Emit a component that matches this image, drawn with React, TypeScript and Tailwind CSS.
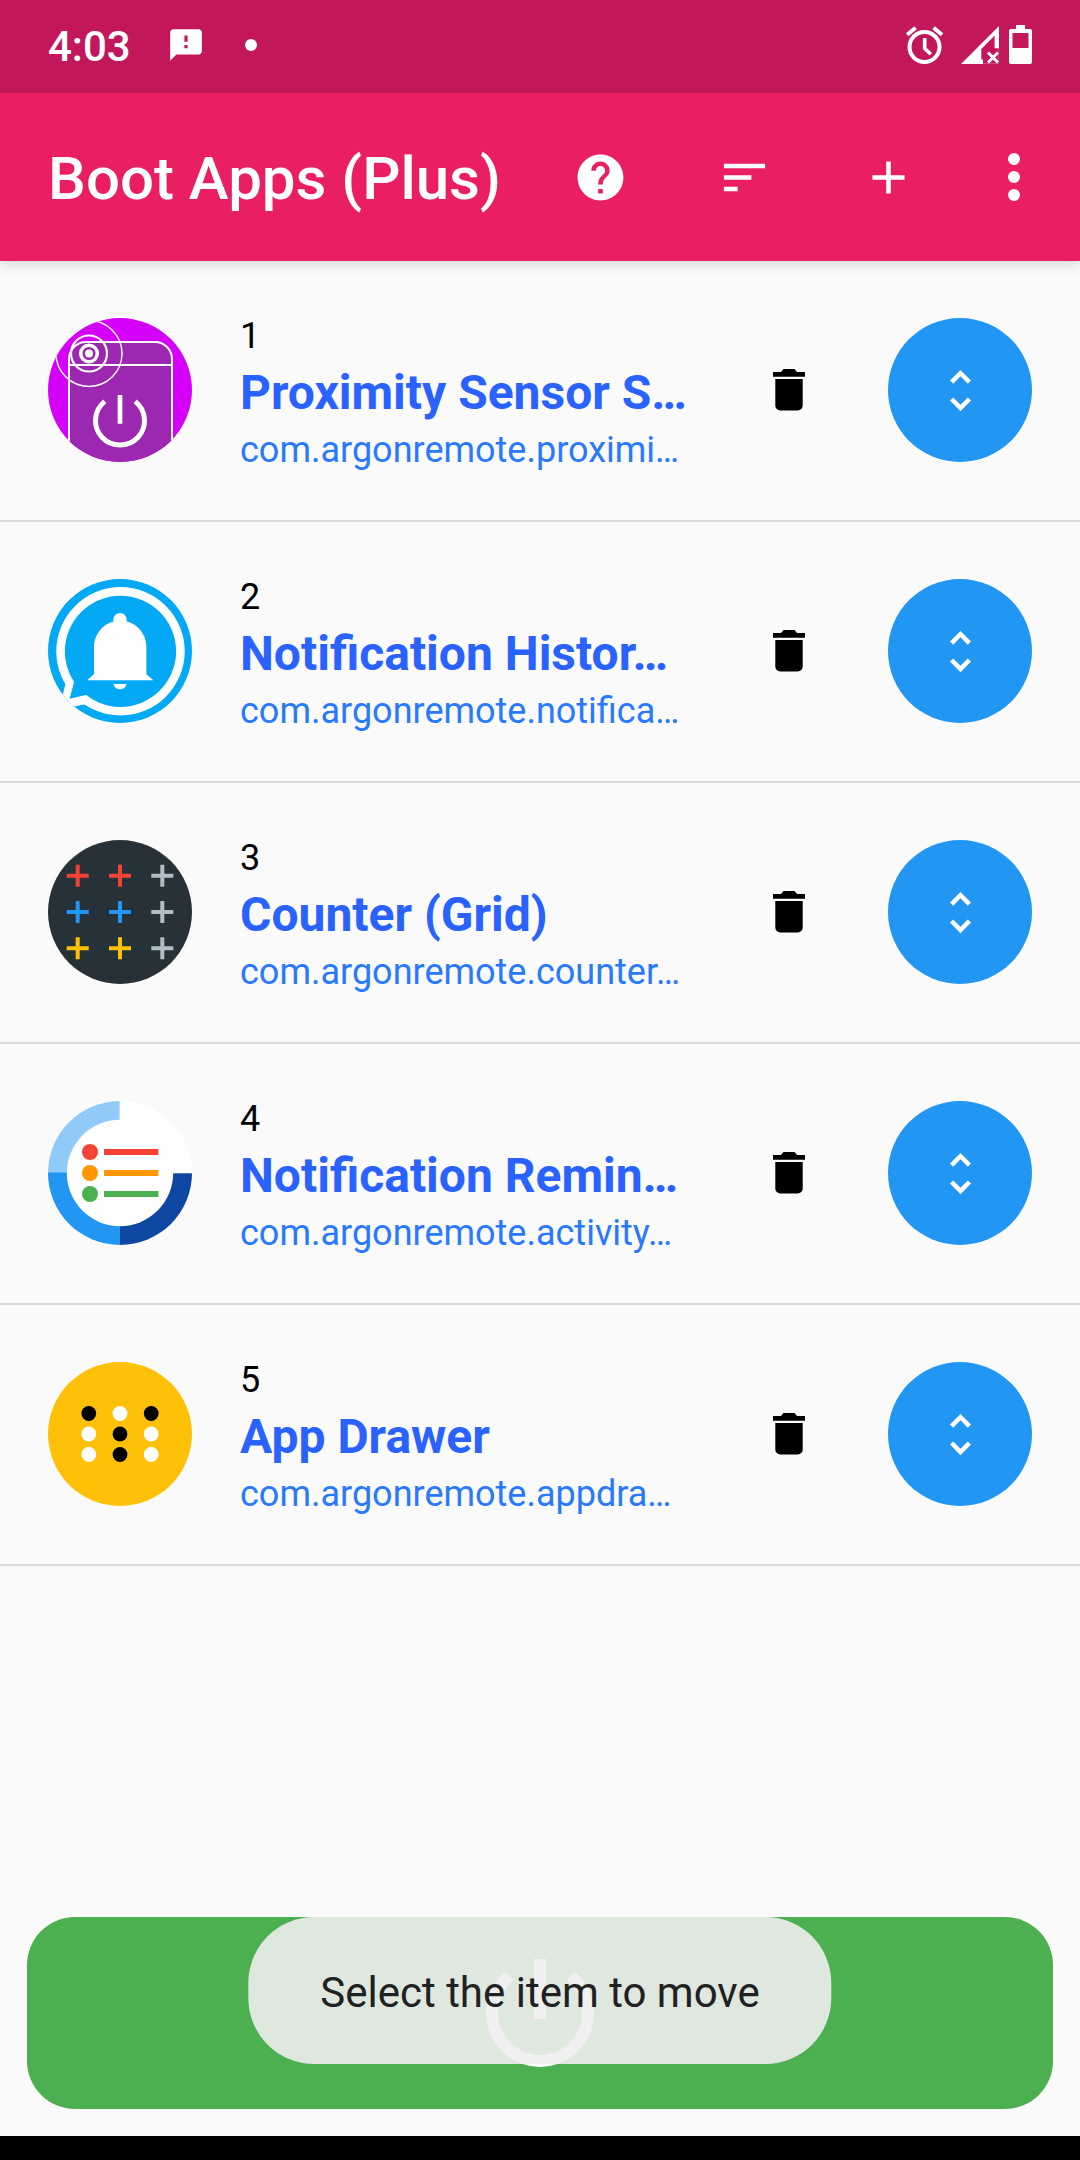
import React from "react";
import {
  MdAdd,
  MdHelp,
  MdPowerSettingsNew,
  MdSmsFailed,
  MdSort,
  MdUnfoldMore,
} from "react-icons/md";

function SensorIcon() {
  return (
    <svg viewBox="0 0 144 144" className="size-full" aria-hidden="true">
      <rect width="144" height="144" fill="#d500f9" />
      <path d="M21 160V41a17 17 0 0 1 17-17h69a17 17 0 0 1 17 17v119z" fill="#9c27b0" stroke="#fff" strokeWidth="2" />
      <path d="M21 47H124" stroke="#fff" strokeWidth="2" />
      <g fill="none" stroke="#fff">
        <circle cx="41" cy="35.5" r="8.3" strokeWidth="3.5" />
        <circle cx="41" cy="35.5" r="18" strokeWidth="2.2" />
        <circle cx="41" cy="35.5" r="33" strokeWidth="1.4" />
        <path d="M72 77V105.7" strokeWidth="4.7" />
        <path d="M56.8 83.4A24.5 24.5 0 1 0 87.2 83.4" strokeWidth="5" />
      </g>
      <circle cx="41" cy="35.5" r="4" fill="#fff" />
    </svg>
  );
}

function BellIcon() {
  return (
    <svg viewBox="0 0 144 144" className="size-full" aria-hidden="true">
      <rect width="144" height="144" fill="#03a9f4" />
      <circle cx="72.5" cy="72.3" r="64.2" fill="#fff" />
      <path d="M17.7 104L15 115L10 135L26.3 127.5L38.5 125L40 110L26 98z" fill="#fff" />
      <circle cx="72.5" cy="72.3" r="55.6" fill="#03a9f4" />
      <path d="M26 103.3L21.7 119.7L37.9 115.9L46 110L32 96z" fill="#03a9f4" />
      <circle cx="72" cy="40.7" r="6.7" fill="#fff" />
      <path d="M46 95.3V67.7a26.2 26.2 0 0 1 52.4 0V95.3L105.4 101.3H39z" fill="#fff" />
      <path d="M65.7 105h12.6a6.3 5.3 0 0 1-12.6 0z" fill="#fff" />
    </svg>
  );
}

function GridIcon() {
  const rows = [
    { y: 35.7, colors: ["#f44336", "#f44336", "#b0bec5"] },
    { y: 72, colors: ["#2196f3", "#2196f3", "#b0bec5"] },
    { y: 108.3, colors: ["#ffc107", "#ffc107", "#b0bec5"] },
  ];
  const columns = [29.7, 72, 114.3];
  return (
    <svg viewBox="0 0 144 144" className="size-full" aria-hidden="true">
      <rect width="144" height="144" fill="#263238" />
      {rows.map((row) =>
        row.colors.map((color, i) => (
          <path
            key={`${row.y}-${i}`}
            d={`M${columns[i] - 11} ${row.y}h22M${columns[i]} ${row.y - 11}v22`}
            stroke={color}
            strokeWidth="4"
          />
        )),
      )}
    </svg>
  );
}

function ReminderIcon() {
  const lines = [
    { y: 51, color: "#f44336" },
    { y: 72, color: "#ff9800" },
    { y: 93, color: "#4caf50" },
  ];
  return (
    <svg viewBox="0 0 144 144" className="size-full" aria-hidden="true">
      <rect width="144" height="144" fill="#fff" />
      <rect width="71.6" height="71.3" fill="#90caf9" />
      <rect y="71.3" width="72" height="72.7" fill="#2196f3" />
      <rect x="72" y="72.3" width="72" height="71.7" fill="#0d47a1" />
      <circle cx="72" cy="72" r="53.2" fill="#fff" />
      {lines.map((line) => (
        <g key={line.y} fill={line.color}>
          <circle cx="42" cy={line.y} r="8" />
          <rect x="56" y={line.y - 3} width="54.4" height="6" />
        </g>
      ))}
    </svg>
  );
}

function DrawerIcon() {
  const dots = [
    ["#000", "#fff", "#000"],
    ["#fff", "#000", "#fff"],
    ["#fff", "#000", "#fff"],
  ];
  return (
    <svg viewBox="0 0 144 144" className="size-full" aria-hidden="true">
      <rect width="144" height="144" fill="#ffc107" />
      {dots.map((row, r) =>
        row.map((color, c) => (
          <circle key={`${r}-${c}`} cx={40.8 + c * 31.2} cy={51.5 + r * 20.5} r="7.4" fill={color} />
        )),
      )}
    </svg>
  );
}

function TrashIcon() {
  return (
    <svg viewBox="0 0 32 42" className="h-[42px] w-8" fill="#000" aria-hidden="true">
      <path d="M0 3h8l2.5-3h11L24 3h8v4.7H0z" />
      <path d="M2.3 10h27.4v26.5a5 5 0 0 1-5 5H7.3a5 5 0 0 1-5-5z" />
    </svg>
  );
}

function AlarmIcon() {
  return (
    <svg viewBox="0 0 44 40" className="h-10 w-11" fill="none" stroke="#fff" strokeWidth="4" aria-hidden="true">
      <circle cx="21.5" cy="22" r="15" />
      <path d="M21.7 13V23.5L27.8 29.2" strokeWidth="3.6" />
      <path d="M4.2 9.8L12.6 2.8M30.6 2.8L39 9.8" />
    </svg>
  );
}

function SignalIcon() {
  return (
    <svg viewBox="0 0 38 38" className="size-[38px]" aria-hidden="true">
      <path d="M0 38L38 0V22.3H33.6V9.5L20.3 23V33.5H22V38z" fill="#fff" />
      <path d="M27 26.5l10 10M37 26.5l-10 10" stroke="#fff" strokeWidth="3" />
      <path d="M22 37.6H37.7V22" fill="none" stroke="#fff" strokeOpacity="0.4" strokeWidth="0.6" />
    </svg>
  );
}

function BatteryIcon() {
  return (
    <svg viewBox="0 0 23 39" className="h-[39px] w-[23px]" aria-hidden="true">
      <path
        fillRule="evenodd"
        d="M7 0h9v4h5a2 2 0 0 1 2 2v31a2 2 0 0 1-2 2H2a2 2 0 0 1-2-2V6a2 2 0 0 1 2-2h5zM3.5 8v15h16V8z"
        fill="#fff"
      />
    </svg>
  );
}

const apps = [
  { name: "Proximity Sensor S…", pkg: "com.argonremote.proximi…", Icon: SensorIcon },
  { name: "Notification Histor…", pkg: "com.argonremote.notifica…", Icon: BellIcon },
  { name: "Counter (Grid)", pkg: "com.argonremote.counter…", Icon: GridIcon },
  { name: "Notification Remin…", pkg: "com.argonremote.activity…", Icon: ReminderIcon },
  { name: "App Drawer", pkg: "com.argonremote.appdra…", Icon: DrawerIcon },
];

export default function App() {
  return (
    <div className="flex min-h-screen flex-col bg-[#fafafa] font-[Roboto,sans-serif]">
      <div className="flex h-[93px] items-center justify-between bg-[#c2185b] px-12 pb-1 text-white">
        <div className="flex items-center">
          <span className="pt-1 text-[42px] leading-[48px] font-medium">4:03</span>
          <MdSmsFailed className="ml-9 size-[38px]" />
          <span className="ml-10 size-3 rounded-full bg-white" />
        </div>
        <div className="flex items-center">
          <AlarmIcon />
          <span className="mr-2.5 ml-3.5">
            <SignalIcon />
          </span>
          <BatteryIcon />
        </div>
      </div>

      <header className="z-10 flex h-[168px] items-center bg-[#e91e63] pr-3 pl-12 text-white shadow-[0_4px_12px_rgba(0,0,0,0.12)]">
        <h1 className="flex-1 pt-1 text-[60px] leading-[72px] font-medium whitespace-nowrap">Boot Apps (Plus)</h1>
        <button aria-label="Help" className="flex h-36 w-36 items-center justify-center">
          <MdHelp className="size-[55px]" />
        </button>
        <button aria-label="Sort" className="flex h-36 w-36 items-center justify-center">
          <MdSort className="size-[55px]" />
        </button>
        <button aria-label="Add" className="flex h-36 w-36 items-center justify-center">
          <MdAdd className="size-[55px]" />
        </button>
        <button aria-label="More options" className="flex h-36 w-[108px] flex-col items-center justify-center gap-1.5">
          <span className="size-3 rounded-full bg-white" />
          <span className="size-3 rounded-full bg-white" />
          <span className="size-3 rounded-full bg-white" />
        </button>
      </header>

      <main className="flex flex-1 flex-col">
        <ol>
          {apps.map(({ name, pkg, Icon }, i) => (
            <li key={name} className="flex min-h-[261px] items-center border-b-2 border-[#dbdbdb] px-12 pb-px">
              <div className="size-36 shrink-0 overflow-hidden rounded-full">
                <Icon />
              </div>
              <div className="ml-12 min-w-0 flex-1 pt-1.5 whitespace-nowrap">
                <p className="text-4xl leading-[42px] text-black">{i + 1}</p>
                <h2 className="text-5xl leading-[72px] font-bold text-[#2962ff]">{name}</h2>
                <p className="text-4xl leading-[42px] text-[#2979ff]">{pkg}</p>
              </div>
              <button aria-label={`Delete ${name}`} className="flex size-36 shrink-0 items-center justify-center">
                <TrashIcon />
              </button>
              <button
                aria-label={`Move ${name}`}
                className="ml-[27px] flex size-36 shrink-0 items-center justify-center rounded-full bg-[#2196f3] text-white"
              >
                <MdUnfoldMore className="size-[55px]" />
              </button>
            </li>
          ))}
        </ol>

        <div className="relative mx-[27px] mt-auto mb-[27px]">
          <button
            aria-label="Start"
            className="flex h-48 w-full items-center justify-center rounded-[48px] bg-[#4caf50] text-white"
          >
            <MdPowerSettingsNew className="size-36" />
          </button>
          <div
            role="status"
            className="absolute top-0 left-1/2 flex h-[147px] -translate-x-1/2 items-center rounded-[66px] bg-[#eeeeee]/90 px-[72px] pt-1 text-[42px] leading-[48px] whitespace-nowrap text-[#212121]"
          >
            Select the item to move
          </div>
        </div>
      </main>

      <footer className="h-6 bg-black" />
    </div>
  );
}
